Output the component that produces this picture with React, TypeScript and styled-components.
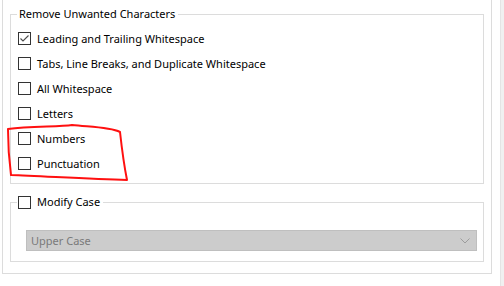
import React, { useState } from 'react';
import styled, { createGlobalStyle } from 'styled-components';

const GlobalStyle = createGlobalStyle`
  html, body {
    margin: 0;
    padding: 0;
    background: #fff;
    overflow: hidden;
  }
  body {
    font-family: 'Noto Sans', 'Open Sans', sans-serif;
    font-size: 11px;
    color: #000;
  }
`

const Page = styled.div`
  position: relative;
  display: flex;
  width: 504px;
  height: 286px;
`

const Panel = styled.div`
  box-sizing: border-box;
  width: 490px;
  height: 274px;
  margin-left: 2px;
  padding: 6px 7px 11px 7px;
  border: 1px solid #dcdcdc;
  border-top: none;
  display: flex;
  flex-direction: column;
  gap: 10px;
`

const Spacer = styled.div`
  flex: 1;
`

const ScrollStrip = styled.div`
  width: 3px;
  height: 100%;
  background: #f0f0f0;
  border-left: 1px solid #e4e4e4;
`

const Group = styled.fieldset`
  margin: 0;
  padding: 0;
  border: 1px solid #dcdcdc;
  min-width: 0;
`

const GroupBody = styled.div<{ $pad: string }>`
  padding: ${p => p.$pad};
`

const Legend = styled.legend<{ $padLeft?: number }>`
  margin-left: 6px;
  padding: 0 3px 0 ${p => p.$padLeft ?? 2}px;
  line-height: 16px;
  display: flex;
  align-items: center;
  gap: 6px;
`

const Row = styled.label`
  display: flex;
  align-items: center;
  gap: 6px;
  height: 25px;
`

const Box = styled.span`
  box-sizing: border-box;
  width: 13px;
  height: 13px;
  border: 1px solid #333;
  background: #fff;
  display: inline-flex;
  align-items: center;
  justify-content: center;
  flex-shrink: 0;
`

const Select = styled.div`
  box-sizing: border-box;
  height: 21px;
  margin-top: 20px;
  background: #cccccc;
  border: 1px solid #bfbfbf;
  display: flex;
  align-items: center;
  justify-content: space-between;
  padding: 0 6px 0 4px;
  color: #7a7a7a;
`

const Annotation = styled.svg`
  position: absolute;
  left: 0;
  top: 0;
  pointer-events: none;
`

const Check = ({ checked }: { checked: boolean }) => (
  <Box>
    {checked && (
      <svg width="11" height="11" viewBox="0 0 11 11">
        <path d="M1.5 5.5 L4 8 L9.5 2.5" fill="none" stroke="#4d4d4d" strokeWidth="1.1" />
      </svg>
    )}
  </Box>
)

const options = [
  'Leading and Trailing Whitespace',
  'Tabs, Line Breaks, and Duplicate Whitespace',
  'All Whitespace',
  'Letters',
  'Numbers',
  'Punctuation',
]

const App: React.FC = () => {
  const [checked] = useState<boolean[]>([true, false, false, false, false, false])

  return (
    <>
      <GlobalStyle />
      <Page>
        <Panel>
          <Group>
            <Legend>Remove Unwanted Characters</Legend>
            <GroupBody $pad="4px 7px 7px 7px">
              {options.map((o, i) => (
                <Row key={o}>
                  <Check checked={checked[i]} />
                  <span>{o}</span>
                </Row>
              ))}
            </GroupBody>
          </Group>
          <Group>
            <Legend $padLeft={1}>
              <Check checked={false} />
              <span>Modify Case</span>
            </Legend>
            <GroupBody $pad="0 6px 10px 15px">
              <Select>
                <span>Upper Case</span>
                <svg width="10" height="6" viewBox="0 0 10 6">
                  <path d="M0.5 0.5 L5 5 L9.5 0.5" fill="none" stroke="#9c9c9c" strokeWidth="1" />
                </svg>
              </Select>
            </GroupBody>
          </Group>
        </Panel>
        <Spacer />
        <ScrollStrip />
        <Annotation width="504" height="286">
          <path
            d="M8 129 C 30 126, 60 127, 72 125 C 90 127, 110 127, 120 132 C 122 150, 124 165, 127 180 C 90 179, 40 176, 11 175 C 9 160, 8 145, 8 129 Z"
            fill="none"
            stroke="#ff1010"
            strokeWidth="2"
            strokeLinejoin="round"
          />
        </Annotation>
      </Page>
    </>
  )
}

export default App;
